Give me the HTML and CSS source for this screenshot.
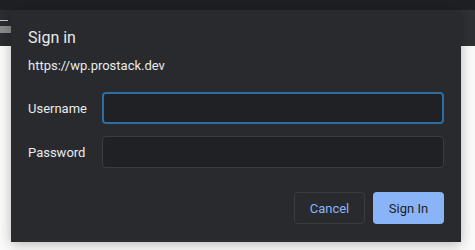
FILE: index.html
```html
<!DOCTYPE html>
<html lang="en">
<head>
    <meta charset="UTF-8">
    <title>Sign in</title>
    <link rel="stylesheet" href="styles.css">
</head>
<body>
    <!-- Browser chrome behind the dialog -->
    <div class="tabstrip"></div>
    <div class="toolbar">
        <div class="bookmark">
            <span class="bookmark-icon"></span>
            <span class="bookmark-bar"></span>
        </div>
    </div>
    <div class="content"></div>

    <!-- Auth dialog -->
    <div class="dialog">
        <h1 class="title">Sign in</h1>
        <p class="origin">https://wp.prostack.dev</p>
        <div class="form">
            <label class="label" for="username">Username</label>
            <input type="text" id="username" class="field focused">
            <label class="label" for="password">Password</label>
            <input type="password" id="password" class="field">
        </div>
        <div class="actions">
            <button class="button cancel">Cancel</button>
            <button class="button primary">Sign In</button>
        </div>
    </div>
</body>
</html>
```

FILE: styles.css
```css
/* General */
body {
    margin: 0;
    background: #ffffff;
    font-family: Roboto, "Liberation Sans", sans-serif;
    height: 250px;
    overflow: hidden;
}

/* Browser chrome */
.tabstrip {
    height: 10px;
    background: #1f2023;
}

.toolbar {
    height: 36px;
    background: #2f3033;
}

.bookmark {
    width: 11px;
    height: 36px;
    background: #2b2c30;
    display: flex;
    flex-direction: column;
}

.bookmark-icon {
    margin-top: 10px;
    height: 3px;
    border-top: 1px solid #c8c8c8;
    width: 8px;
}

.bookmark-bar {
    margin-top: 2px;
    height: 7px;
    background: #8a8b8d;
}

.content {
    height: 204px;
    background: #fafafa;
}

/* Dialog */
.dialog {
    position: absolute;
    left: 11px;
    top: 10px;
    width: 450px;
    height: 232px;
    box-sizing: border-box;
    padding: 18px 17px 0 17px;
    background: #292a2d;
    box-shadow: 0 2px 12px rgba(0, 0, 0, 0.28);
    color: #e8eaed;
}

.title {
    margin: 0;
    font-size: 16px;
    font-weight: 400;
    line-height: 20px;
}

.origin {
    margin: 10px 0 0 0;
    font-size: 13px;
    line-height: 16px;
}

/* Form grid */
.form {
    display: grid;
    grid-template-columns: 74px 1fr;
    row-gap: 12px;
    align-items: center;
    margin-top: 18px;
}

.label {
    font-size: 13px;
}

.field {
    height: 32px;
    box-sizing: border-box;
    margin: 0;
    background: #202124;
    border: 1px solid #3c3d41;
    border-radius: 4px;
    color: #e8eaed;
    outline: none;
}

.field.focused {
    border: 2px solid #2b6ea3;
}

/* Buttons */
.actions {
    display: flex;
    justify-content: flex-end;
    gap: 8px;
    margin-top: 24px;
}

.button {
    width: 71px;
    height: 32px;
    border-radius: 4px;
    font-family: Roboto, "Liberation Sans", sans-serif;
    font-size: 13px;
    cursor: pointer;
}

.button.cancel {
    background: #292a2d;
    border: 1px solid #3c3d41;
    color: #8ab4f8;
}

.button.primary {
    background: #8ab4f8;
    border: none;
    color: #202124;
}
```
